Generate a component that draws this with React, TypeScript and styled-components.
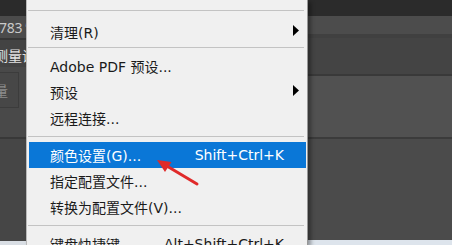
import styled, { createGlobalStyle } from 'styled-components'

const Global = createGlobalStyle`
  html, body {
    margin: 0;
    padding: 0;
    background: #454545;
  }
  body {
    font-family: "DejaVu Sans", "Noto Sans CJK SC", sans-serif;
  }
`

type ItemProps = {
  label: string
  shortcut?: string
  submenu?: boolean
  active?: boolean
  lower?: boolean
}

const MenuItem = ({ label, shortcut, submenu, active, lower }: ItemProps) => {
  return (
    <Row $active={!!active} $lower={!!lower}>
      <Label>{label}</Label>
      <Shortcut>{shortcut}</Shortcut>
      <ArrowCell>
        {submenu &&
          <svg width='6' height='11' viewBox='0 0 6 11'>
            <path d='M0 0 L6 5.5 L0 11 Z' fill='#000' />
          </svg>
        }
      </ArrowCell>
    </Row>
  )
}

const App = () => {
  return (
    <Screen>
      <Global />
      <LeftPanel>
        <Band $h={16} $bg='#2b2b2b' />
        <Band $h={22} $bg='#4b4b4b'>
          <Digits>783 ’</Digits>
        </Band>
        <Band $h={2} $bg='#363636' />
        <Band $h={27} $bg='#434343'>
          <PanelLabel>测量设</PanelLabel>
        </Band>
        <BoxBand>
          <FieldBox>量</FieldBox>
        </BoxBand>
        <Band $h={2} $bg='#383838' />
        <Band $grow $bg='#464646' />
        <Band $h={4} $bg='#d9dee4' />
      </LeftPanel>

      <Menu>
        <Spacer />
        <Separator />
        <MenuItem label='清理(R)' submenu lower />
        <Separator />
        <MenuItem label='Adobe PDF 预设...' />
        <MenuItem label='预设' submenu />
        <MenuItem label='远程连接...' />
        <Separator />
        <MenuItem label='颜色设置(G)...' shortcut='Shift+Ctrl+K' active />
        <MenuItem label='指定配置文件...' />
        <MenuItem label='转换为配置文件(V)...' />
        <Separator />
        <MenuItem label='键盘快捷键...' shortcut='Alt+Shift+Ctrl+K' />
      </Menu>

      <RightPanel>
        <Band $h={16} $bg='#2b2b2b' />
        <Band $h={18} $bg='#4c4c4c' />
        <Band $h={4} $bg='#404040' />
        <Band $h={36} $bg='#444444' />
        <Band $h={2} $bg='#393939' />
        <Band $h={61} $bg='#515151' />
        <Band $h={2} $bg='#3b3b3b' />
        <Band $grow $bg='#4b4b4b' />
        <Band $h={5} $bg='#dde4ec' />
      </RightPanel>

      <Annotation width='452' height='245' viewBox='0 0 452 245'>
        <line x1='197' y1='184' x2='166' y2='165.5' stroke='#e02a2a' strokeWidth='3' strokeLinecap='round' />
        <path d='M157 160 L171.5 162 L165 172 Z' fill='#e02a2a' />
      </Annotation>
    </Screen>
  )
}

const Screen = styled.div`
  position: relative;
  display: flex;
  width: 452px;
  height: 245px;
  overflow: hidden;
`

const LeftPanel = styled.div`
  width: 26px;
  flex-shrink: 0;
  display: flex;
  flex-direction: column;
  overflow: hidden;
`

const RightPanel = styled.div`
  flex: 1;
  display: flex;
  flex-direction: column;
`

const Band = styled.div<{ $h?: number, $bg: string, $grow?: boolean }>`
  height: ${props => props.$h ? `${props.$h}px` : 'auto'};
  flex: ${props => props.$grow ? '1' : '0 0 auto'};
  background: ${props => props.$bg};
  display: flex;
  align-items: center;
  white-space: nowrap;
  overflow: hidden;
`

const Digits = styled.span`
  font-family: "Noto Sans", sans-serif;
  font-size: 14px;
  color: #c9c9c9;
  margin-left: -1px;
  letter-spacing: -0.3px;
`

const PanelLabel = styled.span`
  font-family: "Noto Sans CJK SC", sans-serif;
  font-size: 14px;
  color: #e2e2e2;
  margin-left: -6px;
  margin-top: 2px;
`

const BoxBand = styled.div`
  height: 70px;
  background: #494949;
  padding-top: 5px;
  box-sizing: border-box;
`

const FieldBox = styled.div`
  width: 26px;
  height: 36px;
  margin-left: -7px;
  box-sizing: border-box;
  border: 1px solid #3c3c3c;
  background: #474747;
  color: #8c8c8c;
  font-family: "Noto Sans CJK SC", sans-serif;
  font-size: 14px;
  display: flex;
  align-items: center;
  padding-left: 0;
`

const Menu = styled.div`
  position: relative;
  z-index: 1;
  width: 282px;
  flex-shrink: 0;
  box-sizing: border-box;
  background: #f0f0f0;
  border-left: 1px solid #b9b9b9;
  border-right: 1px solid #979797;
  box-shadow: 3px 2px 4px rgba(0, 0, 0, 0.35);
  display: flex;
  flex-direction: column;
`

const Spacer = styled.div`
  height: 5px;
  flex-shrink: 0;
`

const Separator = styled.div`
  height: 1px;
  flex-shrink: 0;
  margin: 5px 3px 5px 1px;
  background: #c3c3c3;
`

const Row = styled.div<{ $active: boolean, $lower: boolean }>`
  height: 26px;
  flex-shrink: 0;
  box-sizing: border-box;
  margin: 0 1px 0 2px;
  padding-left: 21px;
  padding-top: ${props => props.$lower ? '5px' : '0'};
  display: grid;
  grid-template-columns: 1fr auto 22px;
  align-items: center;
  font-size: 14px;
  white-space: nowrap;
  color: ${props => props.$active ? '#ffffff' : '#1a1a1a'};
  background: ${props => props.$active ? '#0a77d7' : 'transparent'};
`

const Label = styled.span``

const Shortcut = styled.span`
  text-align: right;
`

const ArrowCell = styled.span`
  display: flex;
  align-items: center;
  padding-left: 9px;
  padding-bottom: 3px;
`

const Annotation = styled.svg`
  position: absolute;
  left: 0;
  top: 0;
  z-index: 2;
  pointer-events: none;
`

export default App
